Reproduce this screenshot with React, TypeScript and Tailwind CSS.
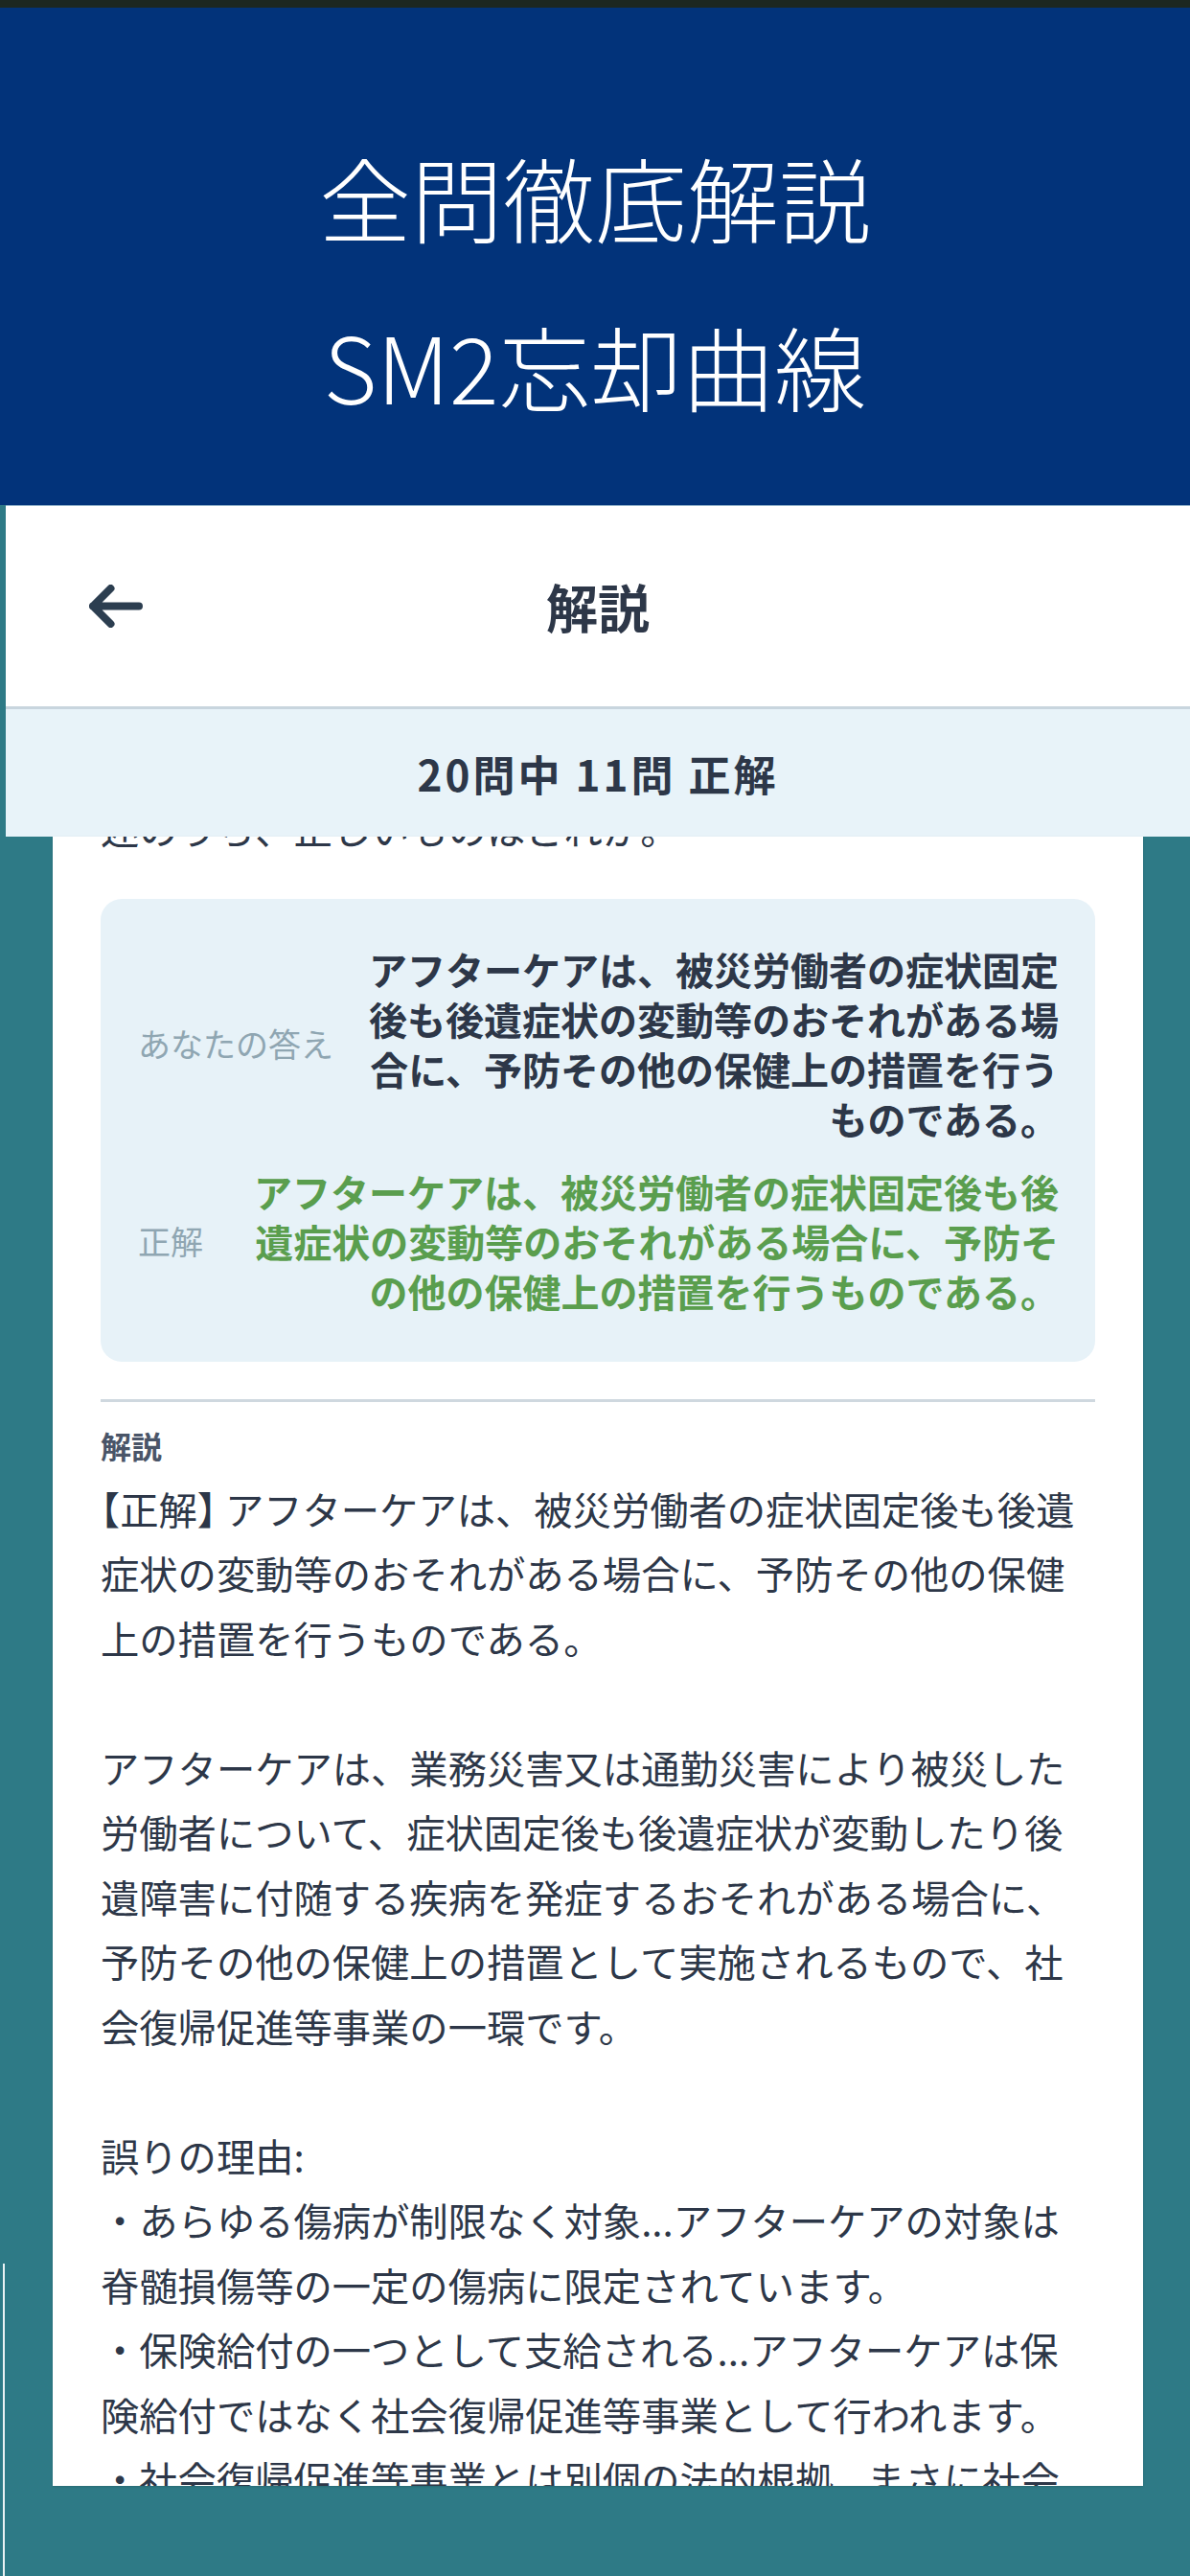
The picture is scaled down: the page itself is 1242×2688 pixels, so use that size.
import React from "react";

const bodyLines: string[] = [
  "",
  "症状の変動等のおそれがある場合に、予防その他の保健",
  "上の措置を行うものである。",
  "",
  "アフターケアは、業務災害又は通勤災害により被災した",
  "労働者について、症状固定後も後遺症状が変動したり後",
  "遺障害に付随する疾病を発症するおそれがある場合に、",
  "予防その他の保健上の措置として実施されるもので、社",
  "会復帰促進等事業の一環です。",
  "",
  "誤りの理由:",
  "・あらゆる傷病が制限なく対象...アフターケアの対象は",
  "脊髄損傷等の一定の傷病に限定されています。",
  "・保険給付の一つとして支給される...アフターケアは保",
  "険給付ではなく社会復帰促進等事業として行われます。",
  "・社会復帰促進等事業とは別個の法的根拠...まさに社会",
  "復帰促進等事業の一つとして位置づけられています。",
];

function BackArrow() {
  return (
    <svg width="56" height="45" viewBox="0 0 56 45" fill="none">
      <path
        d="M22.5 4 L4 22.5 L22.5 41 M4 22.5 H52"
        stroke="#2c3e50"
        strokeWidth="8"
        strokeLinecap="round"
        strokeLinejoin="round"
      />
    </svg>
  );
}

export default function App() {
  return (
    <div className="relative flex h-[2688px] w-[1242px] flex-col overflow-hidden bg-[#2e7a86] font-['Noto_Sans_CJK_JP','Noto_Sans',sans-serif]">
      <div className="h-[8px] shrink-0 bg-[#1c2721]" />
      <header className="flex h-[519px] shrink-0 flex-col items-center bg-[#02337a] pt-[109px] text-white">
        <div className="whitespace-nowrap text-[96px] font-light leading-[176px]">全問徹底解説</div>
        <div className="whitespace-nowrap text-[96px] font-light leading-[176px]">SM2忘却曲線</div>
      </header>

      <nav className="ml-[6px] grid h-[210px] shrink-0 grid-cols-[1fr_auto_1fr] items-center border-t border-[#8fb0c8] bg-white">
        <div className="pl-[87px]">
          <BackArrow />
        </div>
        <div className="text-[54px] font-bold leading-none text-[#2d3748]">解説</div>
        <div />
      </nav>
      <div className="ml-[6px] h-[3px] shrink-0 bg-[#c8d5de]" />
      <div className="ml-[6px] flex h-[133px] shrink-0 items-center justify-center bg-[#e8f3f9]">
        <span className="text-[44px] font-bold leading-none tracking-[3px] text-[#2d3748]">20問中 11問 正解</span>
      </div>

      <div className="ml-[55px] h-[1721px] w-[1138px] shrink-0 overflow-hidden bg-white px-[50px] shadow-sm">
        <div className="-mt-[43px] whitespace-nowrap text-[40.3px] leading-[67.5px] text-[#2d3748]">
          述のうち、正しいものはどれか。
        </div>

        <div className="mt-[40px] flex flex-col gap-[24px] rounded-[22px] bg-[#e7f2f8] pb-[48px] pl-[39px] pr-[38px] pt-[47px]">
          <div className="flex items-center">
            <div className="shrink-0 whitespace-nowrap text-[34px] leading-none text-[#8fa6b2]">あなたの答え</div>
            <div className="flex-1 whitespace-nowrap text-right text-[40px] font-bold leading-[52px] text-[#2d3748]">
              アフターケアは、被災労働者の症状固定
              <br />
              後も後遺症状の変動等のおそれがある場
              <br />
              合に、予防その他の保健上の措置を行う
              <br />
              ものである。
            </div>
          </div>
          <div className="flex items-center">
            <div className="shrink-0 whitespace-nowrap text-[34px] leading-none text-[#8fa6b2]">正解</div>
            <div className="flex-1 whitespace-nowrap text-right text-[40px] font-bold leading-[52px] text-[#5a9e4e]">
              アフターケアは、被災労働者の症状固定後も後
              <br />
              遺症状の変動等のおそれがある場合に、予防そ
              <br />
              の他の保健上の措置を行うものである。
            </div>
          </div>
        </div>

        <div className="mt-[39px] h-[3px] bg-[#cfd8df]" />

        <div className="mt-[25px] text-[32px] font-semibold leading-[40px] text-[#4a5568]">解説</div>

        <div className="mt-[12px] text-[40.3px] leading-[67.5px] text-[#2d3748]">
          <div className="whitespace-nowrap">
            <span className="[font-feature-settings:'halt']">【</span>正解<span className="[font-feature-settings:'halt']">】</span> アフターケアは、被災労働者の症状固定後も後遺
          </div>
          {bodyLines.slice(1).map((line, i) =>
            line === "" ? (
              <div key={i} className="h-[67.5px]" />
            ) : (
              <div key={i} className="whitespace-nowrap">
                {line}
              </div>
            )
          )}
        </div>
      </div>

      <div className="flex-1" />
      <div className="absolute left-[3px] top-[2362px] h-[326px] w-[2px] bg-white/90" />
    </div>
  );
}
